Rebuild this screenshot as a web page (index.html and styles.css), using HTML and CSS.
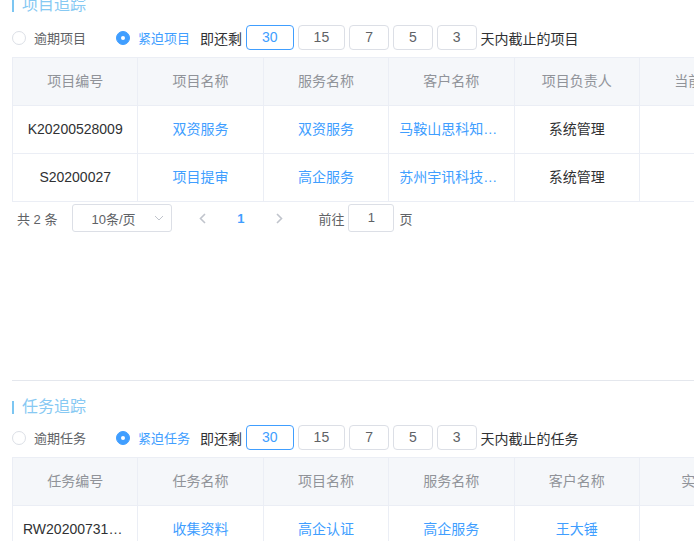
FILE: index.html
```html
<!DOCTYPE html>
<html lang="zh-CN">
<head>
<meta charset="utf-8">
<link rel="stylesheet" href="styles.css">
</head>
<body>
<div class="page">
  <section class="section">
    <div class="title">项目追踪</div>
    <div class="filter">
      <label class="radio"><span class="radio-dot"></span><span class="radio-label">逾期项目</span></label>
      <label class="radio checked"><span class="radio-dot"></span><span class="radio-label">紧迫项目</span></label>
      <span class="remain">即还剩</span>
      <div class="days">
        <span class="day active">30</span>
        <span class="day">15</span>
        <span class="day">7</span>
        <span class="day">5</span>
        <span class="day">3</span>
      </div>
      <span class="suffix">天内截止的项目</span>
    </div>
    <div class="table-wrap">
      <div class="table">
        <div class="cell head">项目编号</div>
        <div class="cell head">项目名称</div>
        <div class="cell head">服务名称</div>
        <div class="cell head">客户名称</div>
        <div class="cell head">项目负责人</div>
        <div class="cell head">当前阶段</div>
        <div class="cell head">项目状态</div>

        <div class="cell">K20200528009</div>
        <div class="cell link">双资服务</div>
        <div class="cell link">双资服务</div>
        <div class="cell link">马鞍山思科知识产权代理有限公司</div>
        <div class="cell">系统管理</div>
        <div class="cell"></div>
        <div class="cell"></div>

        <div class="cell">S20200027</div>
        <div class="cell link">项目提审</div>
        <div class="cell link">高企服务</div>
        <div class="cell link">苏州宇讯科技有限公司</div>
        <div class="cell">系统管理</div>
        <div class="cell"></div>
        <div class="cell"></div>
      </div>
    </div>
    <div class="pagination">
      <span class="total">共 2 条</span>
      <div class="select">
        <span>10条/页</span>
        <svg class="caret" width="10" height="6" viewBox="0 0 10 6"><polyline points="1,1 5,5 9,1" fill="none" stroke="#c0c4cc" stroke-width="1"/></svg>
      </div>
      <span class="pg-btn prev"><svg width="7" height="11" viewBox="0 0 7 11"><polyline points="6,1 1.5,5.5 6,10" fill="none" stroke="#c0c4cc" stroke-width="1.6"/></svg></span>
      <span class="pg-num">1</span>
      <span class="pg-btn next"><svg width="7" height="11" viewBox="0 0 7 11"><polyline points="1,1 5.5,5.5 1,10" fill="none" stroke="#c0c4cc" stroke-width="1.6"/></svg></span>
      <span class="goto">前往</span>
      <span class="goto-input">1</span>
      <span class="page-unit">页</span>
    </div>
  </section>

  <div class="divider"></div>

  <section class="section second">
    <div class="title">任务追踪</div>
    <div class="filter">
      <label class="radio"><span class="radio-dot"></span><span class="radio-label">逾期任务</span></label>
      <label class="radio checked"><span class="radio-dot"></span><span class="radio-label">紧迫任务</span></label>
      <span class="remain">即还剩</span>
      <div class="days">
        <span class="day active">30</span>
        <span class="day">15</span>
        <span class="day">7</span>
        <span class="day">5</span>
        <span class="day">3</span>
      </div>
      <span class="suffix">天内截止的任务</span>
    </div>
    <div class="table-wrap">
      <div class="table">
        <div class="cell head">任务编号</div>
        <div class="cell head">任务名称</div>
        <div class="cell head">项目名称</div>
        <div class="cell head">服务名称</div>
        <div class="cell head">客户名称</div>
        <div class="cell head">实施人</div>
        <div class="cell head">截止时间</div>

        <div class="cell">RW2020073100012</div>
        <div class="cell link">收集资料</div>
        <div class="cell link">高企认证</div>
        <div class="cell link">高企服务</div>
        <div class="cell link">王大锤</div>
        <div class="cell"></div>
        <div class="cell"></div>
      </div>
    </div>
  </section>
</div>
</body>
</html>
```
FILE: styles.css
```css
* { box-sizing: border-box; }

html, body {
  margin: 0;
  padding: 0;
  overflow: hidden;
  background: #ffffff;
}

body {
  font-family: "Liberation Sans", "Noto Sans CJK SC", sans-serif;
  color: #303133;
  font-size: 14px;
  width: 694px;
  height: 541px;
}

.page {
  margin-top: -6px;
  padding-left: 12px;
}

.title {
  display: flex;
  align-items: center;
  height: 22px;
  font-size: 16px;
  line-height: 22px;
  color: #87c9f3;
}

.title::before {
  content: "";
  width: 2px;
  height: 13px;
  background: #7cc6f2;
  margin-right: 8px;
}

.filter {
  display: flex;
  align-items: center;
  height: 25px;
  margin-top: 9px;
  white-space: nowrap;
}

.second .filter {
  margin-top: 7px;
}

.radio {
  display: flex;
  align-items: center;
  margin-right: 30px;
  font-size: 13px;
  color: #606266;
}

.radio.checked {
  margin-right: 10px;
  color: #409eff;
}

.radio-dot {
  width: 14px;
  height: 14px;
  border: 1px solid #dcdfe6;
  border-radius: 50%;
  margin-right: 8px;
  background: #fff;
  position: relative;
}

.radio.checked .radio-dot {
  border-color: #409eff;
  background: #409eff;
}

.radio.checked .radio-dot::after {
  content: "";
  position: absolute;
  width: 4px;
  height: 4px;
  border-radius: 50%;
  background: #fff;
  left: 4px;
  top: 4px;
}

.remain {
  color: #303133;
  margin-right: 4px;
}

.days {
  display: flex;
  gap: 4px;
}

.day {
  height: 25px;
  line-height: 23px;
  padding: 0 15px;
  border: 1px solid #dcdfe6;
  border-radius: 4px;
  color: #606266;
  font-size: 14px;
}

.day.active {
  border-color: #409eff;
  color: #409eff;
}

.suffix {
  margin-left: 4px;
  color: #303133;
}

.table-wrap {
  margin-top: 7px;
  overflow: hidden;
}

.table {
  display: grid;
  grid-template-columns: repeat(7, 125.4px);
  width: max-content;
  border-top: 1px solid #ebeef5;
  border-left: 1px solid #ebeef5;
}

.cell {
  height: 48px;
  line-height: 47px;
  border-right: 1px solid #ebeef5;
  border-bottom: 1px solid #ebeef5;
  padding: 0 10px;
  text-align: center;
  white-space: nowrap;
  overflow: hidden;
  text-overflow: ellipsis;
  color: #303133;
}

.cell.head {
  height: 48px;
  line-height: 47px;
  background: #f5f7fa;
  color: #909399;
  font-weight: normal;
}

.cell.link {
  color: #409eff;
}

.pagination {
  display: flex;
  align-items: center;
  height: 28px;
  margin-top: 2px;
  font-size: 13px;
  color: #606266;
  white-space: nowrap;
}

.total {
  margin-left: 5px;
  margin-right: 15px;
}

.select {
  width: 100px;
  height: 28px;
  border: 1px solid #dcdfe6;
  border-radius: 3px;
  display: flex;
  align-items: center;
  justify-content: space-between;
  padding: 0 7px 0 18px;
  color: #606266;
  margin-right: 12px;
}

.caret {
  display: block;
}

.pg-btn {
  width: 36px;
  height: 28px;
  display: flex;
  align-items: center;
  justify-content: center;
}

.pg-num {
  width: 37px;
  margin: 0 2px;
  text-align: center;
  color: #409eff;
  font-weight: bold;
}

.goto {
  margin-left: 21px;
  margin-right: 4px;
}

.goto-input {
  width: 46px;
  height: 28px;
  line-height: 26px;
  border: 1px solid #dcdfe6;
  border-radius: 3px;
  text-align: center;
  color: #606266;
}

.page-unit {
  margin-left: 5px;
}

.divider {
  height: 1px;
  background: #e4e7ed;
  margin-top: 148px;
  margin-bottom: 15px;
}
```
